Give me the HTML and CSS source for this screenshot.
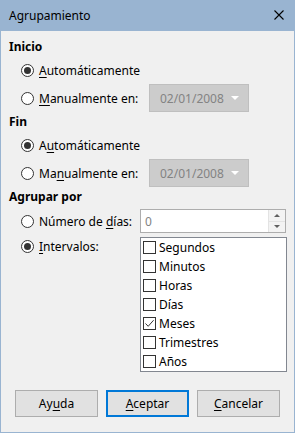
FILE: index.html
```html
<!DOCTYPE html>
<html lang="es">
<head>
    <meta charset="UTF-8">
    <meta name="viewport" content="width=device-width, initial-scale=1.0">
    <title>Agrupamiento</title>
    <link rel="stylesheet" href="styles.css">
</head>
<body>
    <div class="Ventana">
        <div class="Titulo">
            <span>Agrupamiento</span>
            <svg class="cerrar" width="10" height="10" viewBox="0 0 10 10">
                <path d="M0.5 0.5 L9.5 9.5 M9.5 0.5 L0.5 9.5" stroke="#000" stroke-width="1.1" fill="none"/>
            </svg>
        </div>
        <form class="Contenido">
            <div class="Seccion">Inicio</div>
            <div class="Fila">
                <label class="radio"><span class="punto on"></span><span><u>A</u>utomáticamente</span></label>
            </div>
            <div class="Fila alta">
                <label class="radio"><span class="punto"></span><span><u>M</u>anualmente en:</span></label>
                <div class="fecha">02/01/2008<span class="flecha"></span></div>
            </div>

            <div class="Seccion">Fin</div>
            <div class="Fila">
                <label class="radio"><span class="punto on"></span><span>A<u>u</u>tomáticamente</span></label>
            </div>
            <div class="Fila alta">
                <label class="radio"><span class="punto"></span><span>Ma<u>n</u>ualmente en:</span></label>
                <div class="fecha">02/01/2008<span class="flecha"></span></div>
            </div>

            <div class="Seccion">Agrupar por</div>
            <div class="Fila dias">
                <label class="radio"><span class="punto"></span><span>Número de <u>d</u>ías:</span></label>
                <div class="numero">
                    <span>0</span>
                    <div class="giro">
                        <span class="arriba"></span>
                        <span class="abajo"></span>
                    </div>
                </div>
            </div>
            <div class="Intervalos">
                <label class="radio"><span class="punto on"></span><span><u>I</u>ntervalos:</span></label>
                <div class="Lista">
                    <div class="item"><span class="caja"></span>Segundos</div>
                    <div class="item"><span class="caja"></span>Minutos</div>
                    <div class="item"><span class="caja"></span>Horas</div>
                    <div class="item"><span class="caja"></span>Días</div>
                    <div class="item"><span class="caja">
                        <svg width="11" height="11" viewBox="0 0 11 11"><path d="M1.5 5.5 L4.2 8.3 L9.6 2.2" stroke="#333" stroke-width="1" fill="none"/></svg>
                    </span>Meses</div>
                    <div class="item"><span class="caja"></span>Trimestres</div>
                    <div class="item"><span class="caja"></span>Años</div>
                </div>
            </div>

            <div class="Botones">
                <button type="button">Ay<u>u</u>da</button>
                <button type="button" class="defecto"><u>A</u>ceptar</button>
                <button type="button"><u>C</u>ancelar</button>
            </div>
        </form>
    </div>
</body>
</html>
```
FILE: styles.css
```css
*
{
    box-sizing: border-box;
}
body
{
    margin: 0;
    font-family: "Noto Sans", "Open Sans", sans-serif;
    font-size: 12px;
    color: #000;
}
u
{
    text-decoration-thickness: 1px;
    text-underline-offset: 2px;
}
.Ventana
{
    width: 295px;
    height: 433px;
    background: #f0f0f0;
    border: 1px solid #99b4d1;
    border-top: none;
}
.Titulo
{
    height: 31px;
    margin: 0 -1px;
    background: #99b4d1;
    display: flex;
    align-items: center;
    justify-content: space-between;
    padding: 0 10px 1px 9px;
}
.cerrar
{
    margin-right: 1px;
}
.Contenido
{
    padding: 6px 0 0 8px;
}
.Seccion
{
    height: 20px;
    line-height: 20px;
    font-weight: bold;
}
.Fila
{
    height: 26px;
    display: flex;
    align-items: center;
    padding-left: 12px;
}
.Fila.alta
{
    height: 28px;
    margin-top: 1px;
}
.Fila.dias
{
    margin-top: 1px;
}
.radio
{
    display: flex;
    align-items: center;
    gap: 5px;
    width: 127px;
}
.punto
{
    width: 13px;
    height: 13px;
    border: 1px solid #333;
    border-radius: 50%;
    background: #fff;
    display: flex;
    align-items: center;
    justify-content: center;
    flex: none;
}
.punto.on::after
{
    content: "";
    width: 7px;
    height: 7px;
    border-radius: 50%;
    background: #333;
}
.fecha
{
    margin-left: 1px;
    width: 100px;
    height: 28px;
    background: #cccccc;
    border: 1px solid #bfbfbf;
    color: #838383;
    display: flex;
    align-items: center;
    justify-content: space-between;
    padding: 0 9px 0 10px;
}
.flecha
{
    width: 0;
    height: 0;
    border-left: 4px solid transparent;
    border-right: 4px solid transparent;
    border-top: 4px solid #fff;
}
.numero
{
    margin-left: -8px;
    width: 146px;
    height: 24px;
    background: #fff;
    border: 1px solid #adadad;
    display: flex;
    align-items: center;
    justify-content: space-between;
    padding-left: 4px;
    color: #838383;
}
.giro
{
    width: 17px;
    height: 22px;
    display: flex;
    flex-direction: column;
    border-left: 1px solid #e3e3e3;
}
.giro span
{
    flex: 1;
    display: flex;
    align-items: center;
    justify-content: center;
    background: #f3f3f3;
}
.giro .arriba
{
    border-bottom: 1px solid #e3e3e3;
}
.giro .arriba::after
{
    content: "";
    border-left: 3px solid transparent;
    border-right: 3px solid transparent;
    border-bottom: 3px solid #606060;
}
.giro .abajo::after
{
    content: "";
    border-left: 3px solid transparent;
    border-right: 3px solid transparent;
    border-top: 3px solid #606060;
}
.Intervalos
{
    display: flex;
    align-items: flex-start;
    padding-left: 12px;
    margin-top: 3px;
}
.Intervalos .radio
{
    height: 18px;
    width: 119px;
}
.Lista
{
    width: 147px;
    height: 135px;
    background: #fff;
    border: 1px solid #828790;
    padding-left: 2px;
}
.item
{
    height: 19px;
    display: flex;
    align-items: center;
    gap: 3px;
}
.caja
{
    width: 13px;
    height: 13px;
    border: 1px solid #333;
    background: #fff;
    display: flex;
    align-items: center;
    justify-content: center;
}
.Botones
{
    display: flex;
    gap: 8px;
    margin-top: 18px;
    padding-left: 6px;
}
button
{
    width: 83px;
    height: 27px;
    font-family: inherit;
    font-size: 12px;
    color: #000;
    background: #e1e1e1;
    border: 1px solid #adadad;
    padding: 0;
}
button.defecto
{
    border: 2px solid #0078d7;
}
```
